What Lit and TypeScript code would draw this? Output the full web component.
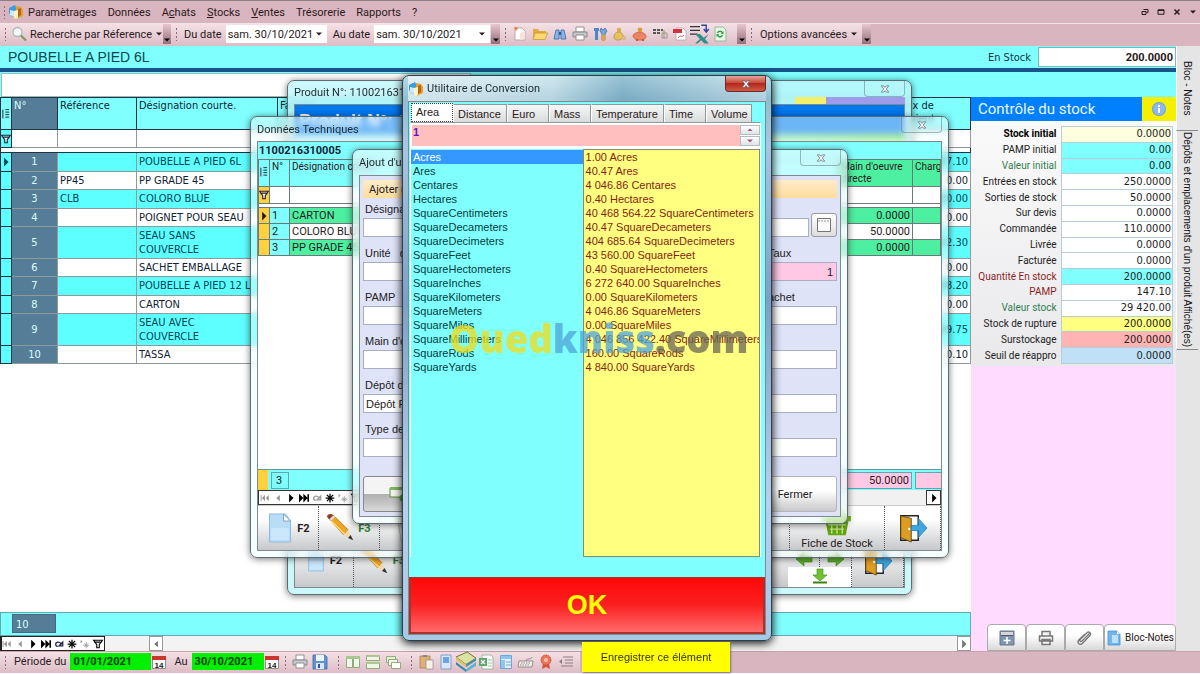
import { LitElement, html, css, svg, nothing, TemplateResult } from "lit";
import { customElement, property } from "lit/decorators.js";
import { classMap } from "lit/directives/class-map.js";

const glyphs: Record<string, TemplateResult> = {
  cube: svg`<path d="M1 4l6-3 1 2v11l-5-2-2-3z" fill="#3d9be0"/><path d="M2 6l4 1v6l-4-2z" fill="#cfeaff"/><path d="M8 2l5 1 2 3v6l-6 3-1-1z" fill="#e6a02a"/><path d="M10 5l3-1v7l-3 2z" fill="#b5651a"/><path d="M6 7l4-1v8l-2 1-2-1z" fill="#fff3c4"/>`,
  lens: svg`<circle cx="6.500" cy="6" r="4.500" fill="#f6fbfa" stroke="#aab8b4" stroke-width="1.300"/><path d="M10 9.500l5 5" stroke="#7c9a5d" stroke-width="2.200"/>`,
  fresh: svg`<path d="M3 2h7l3 3v9H3z" fill="#fff" stroke="#b9a9a9"/><path d="M2 1l4 1-2 3z" fill="#f2732f"/><path d="M8 7l5-2v8l-5 1z" fill="#f6e3d9"/>`,
  open: svg`<path d="M1 3h5l1 2h7v8H1z" fill="#e2ab3d"/><path d="M3 7h13l-3 6.500H1z" fill="#fbd873" stroke="#c89227" stroke-width=".7"/>`,
  binoc: svg`<path d="M2 13l2-9h3v9zM9 13V4h3l2 9z" fill="#8ab6e4" stroke="#4272ac" stroke-width=".9"/><path d="M7 6h2v3H7z" fill="#2c5b9b"/>`,
  print: svg`<path d="M4 1h8v5H4z" fill="#fff" stroke="#888" stroke-width=".9"/><path d="M1 6h14v5H1z" fill="#c6c8cc" stroke="#808286" stroke-width=".9"/><path d="M4 9h8v5H4z" fill="#fff" stroke="#888" stroke-width=".9"/>`,
  tools: svg`<path d="M2 2h5v3H6v9H3V5H2z" fill="#4e87c5"/><path d="M9 2l2 2 2-2 2 3-2 3v6h-3V8L8 5z" fill="#79a9d9" stroke="#35659d" stroke-width=".7"/><path d="M10 9h3v6h-3z" fill="#e8a431"/>`,
  coins: svg`<circle cx="7" cy="4" r="2.200" fill="#d8b24a"/><path d="M2 11c0-4 3-5 5-5s4 2 4 4-2 4-4 4-5 0-5-3z" fill="#e5c25c" stroke="#b3872c" stroke-width=".7"/><circle cx="12" cy="12" r="2.200" fill="#d9b98e"/>`,
  pig: svg`<circle cx="8" cy="4" r="2.400" fill="#e09a3a"/><path d="M1 10c1-5 12-5 13 0s-12 6-13 0z" fill="#ea8461" stroke="#c0583a" stroke-width=".7"/><path d="M4 13h2v2H4zM10 13h2v2h-2z" fill="#c0583a"/>`,
  cells: svg`<path d="M1 3h3v2H1zM5 3h3v2H5zM9 3h2v2H9zM1 6h3v2H1zM5 6h3v2H5z" fill="#555"/><path d="M10 7h5v5h-5z" fill="none" stroke="#999"/><path d="M12 4v8" stroke="#8b9c54"/>`,
  pdf: svg`<path d="M4 2h7l3 3v9H4z" fill="#fff" stroke="#b7a5a5" stroke-width=".8"/><path d="M1 3h9v4H1z" fill="#d2323c"/><path d="M6 12c3-4 4 0 6-3" stroke="#c66" fill="none"/>`,
  excel: svg`<path d="M0 2h8M0 5h8M0 8h6" stroke="#333" stroke-width="1"/><path d="M9 1h4v5M11 4l2 2.500L15 4" fill="none" stroke="#27479c" stroke-width="1.100"/><path d="M4 8h4l3 3 4-3-3 4 3 3.500h-3.500L9 13l-3 2.500H4L8 12z" fill="#2f8f86"/>`,
  reload: svg`<path d="M3 1h8l3 3v11H3z" fill="#e9f6e6" stroke="#8fb59a" stroke-width=".9"/><path d="M5.500 7c1-2.500 4-2.500 5 0M10.500 9c-1 2.500-4 2.500-5 0" fill="none" stroke="#2fa045" stroke-width="1.500"/><path d="M11.500 5v3H9zM4.500 11V8H7z" fill="#2fa045"/>`,
  save: svg`<path d="M1 1h12l2 2v12H1z" fill="#5f93d0" stroke="#3d6aa7" stroke-width=".8"/><path d="M4 1h8v6H4z" fill="#eef5fd"/><path d="M4 9h8v6H4z" fill="#d8e6f7"/><path d="M6 10h2v4H6z" fill="#2d5a97"/>`,
  cols: svg`<path d="M1.500 2.500h6v11h-6zM8.500 2.500h6v11h-6z" fill="#f0f6e8" stroke="#8eab78"/><path d="M1 2h14v3H1z" fill="#a9c690"/>`,
  rows: svg`<path d="M1.500 1.500h13v5h-13zM1.500 8.500h13v6h-13z" fill="#f0f6e8" stroke="#8eab78"/><path d="M1 1h14v2H1zM1 8h14v2H1z" fill="#a9c690"/>`,
  cascade: svg`<path d="M1.500 2.500h9v6h-9z" fill="#e6f2d9" stroke="#8eab78"/><path d="M3.500 5.500h9v6h-9z" fill="#f0f7e8" stroke="#8eab78"/><path d="M6.500 8.500h9v6h-9z" fill="#fff" stroke="#8eab78"/>`,
  paste: svg`<path d="M2 2h10v12H2z" fill="#dcb076" stroke="#a8814c" stroke-width=".8"/><path d="M5 1h4v2H5z" fill="#888"/><path d="M8 6h7v9H8z" fill="#f5f2ec" stroke="#9c968c" stroke-width=".8"/>`,
  note: svg`<path d="M3 1h10v14H3z" fill="#d9e8fa" stroke="#7c9fca"/><path d="M5 3h6v6H5z" fill="#6fa2e0"/>`,
  books: svg`<path d="M0 4l9-4 7 5-8 5z" fill="#d9e4a3" stroke="#7a6b34" stroke-width=".8"/><path d="M0 4l8 6v2L0 7z" fill="#e0c274"/><path d="M8 10l8-5v2l-8 5z" fill="#4a90a6"/><path d="M0 8l8 6v2l-8-6z" fill="#2f8aa1"/><path d="M8 14l8-6v3l-8 5z" fill="#57b6cf"/>`,
  xls: svg`<path d="M4 1h9l2 2v12H4z" fill="#fff" stroke="#8aa98a" stroke-width=".8"/><path d="M1 4h8v8H1z" fill="#5aa369"/><path d="M3 6l4 4M7 6l-4 4" stroke="#fff" stroke-width="1.300"/><path d="M10 6h4M10 9h4M10 12h4" stroke="#9bc49b"/>`,
  sheet: svg`<path d="M2.500 1.500h11v13h-11z" fill="#e4f1fc" stroke="#6aa8dc"/><path d="M3 2h10v3H3zM3 6h4v8H3z" fill="#8cc4ee"/><path d="M8 8h5M8 11h5" stroke="#6aa8dc"/>`,
  keys: svg`<path d="M1 7h14l-1 6H0z" fill="#f1efee" stroke="#8d8583" stroke-width=".9"/><path d="M3 9h10M2 11h10" stroke="#8d8583" stroke-dasharray="1.500 1"/><path d="M8 7c0-3 5-1 6-4" stroke="#8d8583" fill="none"/>`,
  seal: svg`<path d="M5 9l-1 6 4-2 4 2-1-6z" fill="#d8573b"/><circle cx="8" cy="6" r="5" fill="#e8745a" stroke="#c24a31" stroke-dasharray="1.500 1"/><circle cx="8" cy="6" r="2.200" fill="#f6b7a5"/>`,
  list: svg`<path d="M5 3h10M7 6h8M7 9h8M3 12h12" stroke="#8b7f83" stroke-width="1.200"/><path d="M4 5v5L1 7.500z" fill="#8b7f83"/>`,
  cal: svg`<path d="M1.500 2.500h13v12h-13z" fill="#fff" stroke="#8c8c8c"/><path d="M1 2h14v4H1z" fill="#c8372d"/><text x="8" y="13.500" font-size="8" font-weight="700" text-anchor="middle" fill="#222" font-family="Liberation Sans, sans-serif">14</text>`,
  doc: svg`<path d="M2 0h9l3 4v12H2z" fill="#b9dcf7" stroke="#8ebde2" stroke-width=".6"/><path d="M10 0l4 4h-4z" fill="#fff" stroke="#7a9cb8" stroke-width=".5"/><path d="M3 8h10v7H3z" fill="#cbe7fb"/>`,
  pencil: svg`<path d="M1 2.500L3.500.5 12 9l-2.500 3z" fill="#f0a41f" stroke="#9a6413" stroke-width=".4"/><path d="M2.500 4L10 11.500" stroke="#ffd676" stroke-width="1"/><path d="M0 1.500C0 0 2.500-.5 3.500.7L1.200 3z" fill="#8c3f2f"/><path d="M1.400 3L3.800.8l1 .9-2.500 2.300z" fill="#d9d9d9"/><path d="M12 9l2.500 5.500L9.500 12z" fill="#f3d9a8"/><path d="M13.500 12l1.500 3-3-1.300z" fill="#333"/>`,
  door: svg`<path d="M1 1h10v14H1z" fill="#fff" stroke="#222" stroke-width=".8"/><path d="M1 1l6 1.500V16L1 13.500z" fill="#dd9d23" stroke="#5c3f0d" stroke-width=".5"/><circle cx="5.800" cy="8.500" r=".7" fill="#fff"/><path d="M7 6.500h4V2.500l5 5.500-5 5.500v-4H7z" fill="#3fa6df" stroke="#1f6ea5" stroke-width=".4"/>`,
  basket: svg`<path d="M0 4h16v3H0z" fill="#7fc021"/><path d="M1.500 7h13L13 15H3z" fill="#63a614"/><path d="M3 9h10M4 11.500h8M5 7v7M8 7v7M11 7v7" stroke="#c7e88e" stroke-width=".8"/><path d="M3 4l3-4M13 4l-3-4" stroke="#7fc021" stroke-width="1.500"/>`,
  recycle: svg`<path d="M1 3h14l-2 13H3z" fill="#e9ece8" stroke="#b4bab2" stroke-width=".6"/><path d="M5 12l3-6 3 6z" fill="none" stroke="#4ea52c" stroke-width="2"/><path d="M0 1h16v2H0z" fill="#7fc75c"/>`,
  left: svg`<path d="M0 8l8-7v4h8v6H8v4z" fill="#5fb22b" stroke="#3b8412" stroke-width=".6"/>`,
  right: svg`<path d="M16 8L8 1v4H0v6h8v4z" fill="#5fb22b" stroke="#3b8412" stroke-width=".6"/>`,
  down: svg`<path d="M8 12L1 6h4V0h6v6h4z" fill="#6fc134" stroke="#3b8412" stroke-width=".6"/><path d="M1 13.500h14" stroke="#3b8412" stroke-width="2"/>`,
  info: svg`<circle cx="8" cy="8" r="7" fill="#6fa0e0"/><circle cx="8" cy="8" r="6" fill="#8db8ee"/><path d="M7 7h2v5H7zM7 4h2v2H7z" fill="#fff"/>`,
  window: svg`<path d="M1.500 1.500h13v13h-13z" fill="#fbfbfb" stroke="#777"/><path d="M2 4h12" stroke="#999" stroke-dasharray="2 1"/>`,
  calc: svg`<path d="M1 1h14v14H1z" fill="#7f96b2" stroke="#6b7788"/><path d="M2 2h12v3H2z" fill="#d6d6d6"/><path d="M2 5h12v1H2z" fill="#556"/><path d="M8 7v7M4.500 10.500h7" stroke="#fff" stroke-width="1.600"/>`,
  printer2: svg`<path d="M4 1.500h8V6H4zM1.500 6h13v5h-13zM4 9.500h8v5H4z" fill="#f4f4f4" stroke="#777" stroke-width="1.500"/>`,
  clip: svg`<path d="M13 3L5 11c-1.500 1.500-3-.2-1.700-1.600L10 2.800c2-2 5 .6 3 2.700l-7.500 7.700c-3 3-6-.8-3.500-3.400L8 4" fill="none" stroke="#777" stroke-width="1.300"/>`,
  memo: svg`<path d="M2 1h9l3 3v11H2z" fill="#6fb6ee" stroke="#4b8fc9" stroke-width=".8"/><path d="M6 5h6v8H6z" fill="#bfe0fb"/><path d="M11 1v3h3z" fill="#fff"/>`,
  plusdoc: svg`<path d="M0 2h15v9H0z" fill="#f2f7ec" stroke="#5b8a43"/><path d="M0 1h15v3H0z" fill="#86b562"/><circle cx="13" cy="12" r="3.500" fill="#4ea52c"/>`,
  first: svg`<path d="M1 3h1.500v10H1zM8 3v10L3 8zM14 3v10L9 8z" fill="currentColor"/>`,
  prev: svg`<path d="M11 3v10L5 8z" fill="currentColor"/>`,
  next: svg`<path d="M5 1v14l7-7z" fill="currentColor"/>`,
  last: svg`<path d="M13.500 2H16v12h-2.500zM0 1v14l7-7zM7 1v14l7-7z" fill="currentColor"/>`,
  redo: svg`<path d="M6 12C1 11 2 4 7 5c3 0 4 2 5 4M14 5v6H8z" fill="none" stroke="currentColor" stroke-width="2"/>`,
  star: svg`<path d="M8 1v14M1 8h14M3 3l10 10M13 3L3 13" stroke="currentColor" stroke-width="2"/>`,
  star2: svg`<path d="M10 5v10M5 10h10M7 7l6 6M13 7l-6 6" stroke="currentColor" stroke-width="1.300"/><path d="M1 1v6l3-3z" fill="currentColor"/>`,
  funnel: svg`<path d="M1 2h14L10 9v5H6V9zM2 5h12" fill="#fff" stroke="currentColor" stroke-width="1.800"/>`,
  bars: svg`<path d="M7 1h6M7 5h6M7 9h6M7 13h6M3 1v14" stroke="#223" stroke-width="1.500"/>`,
  cross: svg`<path d="M2 3h4l2 2.500L10 3h4l-4 5 4 5h-4l-2-2.500L6 13H2l4-5z" fill="#fff" stroke="#56606a" stroke-width="1.100"/>`,
  tiny: svg`<path d="M2 5l6 6 6-6z" fill="currentColor"/>`,
  tinyup: svg`<path d="M3 10l5-5 5 5z" fill="currentColor"/>`,
  restore: svg`<path d="M5 3h9v6h-3M2 7h8v6H2z" fill="none" stroke="currentColor" stroke-width="2"/>`,
  maxi: svg`<path d="M2 3.500h12v9H2zM2 5h12" fill="none" stroke="currentColor" stroke-width="2"/>`,
  quit: svg`<path d="M3 3l10 10M13 3L3 13" stroke="currentColor" stroke-width="3"/>`,
};

const ico = (name: string, cls = "i16") =>
  html`<svg class=${cls} viewBox="0 0 16 16" aria-hidden="true">${glyphs[name]}</svg>`;

const font = css`
  * { box-sizing: border-box; }
  button, input, select, a { font: inherit; color: inherit; margin: 0; padding: 0; border: 0; border-radius: 0; background: none; text-decoration: none; }
  button { display: flex; align-items: center; justify-content: center; white-space: nowrap; }
  input { min-width: 0; outline: 0; }
  svg { display: block; flex: none; overflow: visible; }
  .i8 { width: 8px; height: 8px; }
  .i10 { width: 10px; height: 10px; }
  .i12 { width: 12px; height: 12px; }
  .i16 { width: 16px; height: 16px; }
  .i20 { width: 20px; height: 20px; }
  .i28 { width: 28px; height: 28px; }
  table { border-collapse: collapse; table-layout: fixed; width: 100%; }
  th { font-weight: 400; text-align: left; }
  th, td { padding: 0; overflow: hidden; white-space: nowrap; }
`;

@customElement("desk-window")
class DeskWindow extends LitElement {
  @property() heading = "";
  @property() kind = "glass";
  static styles = [font, css`
    :host { position: absolute; display: flex; flex-direction: column; border: 1px solid #5d6b72; border-radius: 7px; padding: 0 6px 6px; box-shadow: 0 1px 7px rgba(0, 0, 0, .55); font-family: Roboto, sans-serif; font-size: 11px; overflow: hidden; }
    .bar { flex: none; display: flex; align-items: flex-start; color: #1c2a30; }
    .name { flex: 1; align-self: center; display: flex; gap: 3px; align-items: center; white-space: nowrap; }
    .x { width: 41px; height: 16px; border: 1px solid rgba(90, 120, 130, .5); border-top: 0; border-radius: 0 0 4px 4px; }
    .x.red { border-color: #6d2a25; background: linear-gradient(#e5a49b, #cb4a3a 45%, #b3281c 50%, #cf5a46); }
    .body { flex: 1; min-height: 0; display: flex; flex-direction: column; border: 1px solid #7b8b90; }
  `];
  render() {
    return html`
      <div class="bar" part="bar">
        <div class="name">${this.kind === "main" ? ico("cube") : nothing}<span>${this.heading}</span></div>
        <button class=${classMap({ x: true, red: this.kind === "main" })} aria-label="Fermer">${ico("cross", "i10")}</button>
      </div>
      <div class="body"><slot></slot></div>`;
  }
}

const units: [string, string][] = [
  ["Acres", "1.00"], ["Ares", "40.47"], ["Centares", "4 046.86"], ["Hectares", "0.40"],
  ["SquareCentimeters", "40 468 564.22"], ["SquareDecameters", "40.47"], ["SquareDecimeters", "404 685.64"],
  ["SquareFeet", "43 560.00"], ["SquareHectometers", "0.40"], ["SquareInches", "6 272 640.00"],
  ["SquareKilometers", "0.00"], ["SquareMeters", "4 046.86"], ["SquareMiles", "0.00"],
  ["SquareMillimeters", "4 046 856 422.40"], ["SquareRods", "160.00"], ["SquareYards", "4 840.00"],
];

@customElement("unit-converter")
class UnitConverter extends LitElement {
  static styles = [font, css`
    :host { flex: 1; display: flex; flex-direction: column; background: #80ffff; font-family: "Liberation Sans", sans-serif; font-size: 11px; min-height: 0; }
    .tabs { display: flex; align-items: flex-end; padding: 2px 0 0 2px; height: 20px; }
    .tab { height: 18px; padding: 0 4px; border: 1px solid #8a9a9c; border-bottom: 0; border-left-color: #fff; background: linear-gradient(#f6f6f6, #d9dcdc); justify-content: flex-start; }
    .tab.on { height: 19px; width: 42px; background: #fff; border: 1px dotted #444; padding: 0 4px 2px; }
    .tab.w54 { width: 54px; } .tab.w42 { width: 42px; } .tab.w72 { width: 73px; } .tab.w46 { width: 46px; }
    .page { flex: 1; min-height: 0; display: flex; flex-direction: column; margin: 0 4px 20px 1px; border: 1px solid #fff; border-top-color: #8a9a9c; border-bottom: 0; }
    .entry { display: flex; background: #fff; padding: 2px 0 3px 1px; height: 26px; }
    .entry input { flex: 1; background: #ffbfbf; color: #5a14c8; font-weight: 700; padding: 0 1px 8px; }
    .spin { display: flex; flex-direction: column; width: 20px; gap: 1px; }
    .spin button { flex: 1; border: 1px solid #b5bcc0; background: linear-gradient(#fff, #dfe4e6); color: #a05a78; }
    .lists { flex: 1; min-height: 0; display: flex; }
    ul { list-style: none; margin: 0; padding: 0; overflow: hidden; line-height: 14px; white-space: nowrap; }
    .from { flex: 173; padding-top: 1px; color: #043c3c; }
    .to { flex: 177; background: #ffff80; border: 1px solid #8a8a6a; color: #8a1c10; }
    li { padding-left: 2px; }
    .sel { background: #3399ff; color: #fff; }
    .ok { flex: none; height: 57px; border: 2px solid #a8322c; border-top-width: 1px; background: linear-gradient(#ff0808, #fb2020 50%, #ff6a6a); color: #ffff00; font-size: 27px; font-weight: 700; }
  `];
  render() {
    const tabs = [["Area", "on"], ["Distance", "w54"], ["Euro", "w42"], ["Mass", "w42"], ["Temperature", "w72"], ["Time", "w42"], ["Volume", "w46"]];
    return html`
      <div class="tabs" role="tablist">${tabs.map(([t, c]) => html`<button role="tab" class="tab ${c}">${t}</button>`)}</div>
      <div class="page">
        <div class="entry"><input aria-label="Valeur" value="1"><div class="spin">
          <button aria-label="Plus">${ico("tinyup", "i8")}</button><button aria-label="Moins">${ico("tiny", "i8")}</button></div></div>
        <div class="lists">
          <ul class="from" role="listbox" aria-label="Unité">${units.map(([u], i) => html`<li role="option" class=${i ? "" : "sel"}>${u}</li>`)}</ul>
          <ul class="to">${units.map(([u, v]) => html`<li>${v} ${u}</li>`)}</ul>
        </div>
      </div>
      <button class="ok">OK</button>`;
  }
}

@customElement("part-form")
class PartForm extends LitElement {
  static styles = [font, css`
    :host { flex: 1; display: flex; flex-direction: column; background: #dfe3f8; padding: 4px 3px; font-family: "Liberation Sans", sans-serif; font-size: 11px; color: #222; }
    .add { height: 18px; padding-left: 6px; justify-content: flex-start; background: linear-gradient(#ffeccb, #ffdc9c); font-family: Roboto, sans-serif; }
    .pair { display: flex; }
    .f { flex: 1; display: flex; flex-direction: column; }
    .f label { height: 25px; padding: 9px 0 0 2px; line-height: 14px; white-space: pre; }
    .f input { height: 19px; background: #fff; border: 1px solid #a9afc0; padding: 0 2px; }
    .first label { height: 20px; padding-top: 4px; }
    .right label { padding-left: 168px; }
    .right label.near { padding-left: 146px; }
    .right .rose { background: #ffc8e4; text-align: right; padding-right: 3px; }
    .pick { width: 26px; height: 24px; align-self: flex-end; margin-left: 2px; border: 1px solid #9a9a9a; border-radius: 3px; background: linear-gradient(#fff, #ddd); }
    .end { margin-top: auto; display: flex; justify-content: space-between; }
    .end button { height: 36px; border: 1px solid #b5b5bd; border-radius: 3px; background: linear-gradient(#fff 40%, #c9c9c9); font-family: Roboto, sans-serif; }
    .end .save { width: 70px; border-color: #888; background: linear-gradient(#f4f4f4 50%, #b0b0b0 51%, #d8d8d8); }
    .end .close { width: 84px; }
  `];
  render() {
    const rows = [
      ["Unité   de mesure", "", "Taux", "1"], ["PAMP", "", "Prix achet", ""], ["Main d'oeuvre", "", " ", ""],
      ["Dépôt de stock", "Dépôt Principal", " ", ""], ["Type de charge", "", " ", ""],
    ];
    return html`
      <button class="add">Ajoter un élément</button>
      <div class="pair"><div class="f first"><label for="d">Désignation</label><input id="d"></div>
        <button class="pick" aria-label="Choisir">${ico("window")}</button></div>
      ${rows.map(([a, v, b, w], i) => html`<div class="pair">
        <div class="f"><label for="a${i}">${a}</label><input id="a${i}" .value=${v}></div>
        <div class="f right"><label class=${i === 1 ? "near" : ""} for="b${i}">${b}</label><input id="b${i}" class=${w ? "rose" : ""} .value=${w}></div>
      </div>`)}
      <div class="end"><button class="save" aria-label="Enregistrer">${ico("plusdoc")}</button><button class="close">Fermer</button></div>`;
  }
}

@customElement("tech-sheet")
class TechSheet extends LitElement {
  static styles = [font, css`
    :host { flex: 1; min-height: 0; display: flex; flex-direction: column; background: #fff; font-family: Roboto, sans-serif; font-size: 11px; }
    .code { height: 17px; line-height: 17px; padding-left: 1px; background: #80ffff; font-weight: 700; color: #123; }
    .c1 { width: 11px; } .c2 { width: 20px; } .c4 { width: 74px; } .c5 { width: 28px; }
    td, th { border: 1px solid #6a7a78; height: 16px; padding: 0 2px; }
    th { background: #80ffff; height: 27px; vertical-align: top; line-height: 12px; white-space: pre-line; padding-top: 1px; font-size: 10px; }
    th.g, .g td { background: #4defa0; }
    tr td:first-child { background: #ffd040; padding: 0; }
    tr .no { background: #80ffff; } .g .no { background: #80ffff; }
    th:first-child { padding: 7px 0 0; }
    .num { text-align: right; }
    tr.filter td { height: 17px; padding: 0; } tr.gap td { height: 4px; background: #fff; }
    .space { flex: 1; }
    .sum { height: 21px; flex: none; display: flex; align-items: center; background: #80ffff; border-top: 1px solid #6a9a98; }
    .mark { width: 10px; align-self: stretch; background: #ffd040; margin-right: 3px; }
    .sum output { border: 1px solid #5fa8b0; height: 17px; line-height: 15px; padding: 0 4px; }
    .sum .one { width: 18px; }
    .sum .rose { background: #ffc8e4; width: 80px; margin-left: auto; text-align: right; padding: 0 2px; }
    .sum .cut { background: #ffc8e4; width: 26px; margin-left: 3px; border-right: 0; }
    .nav { height: 15px; flex: none; display: flex; justify-content: space-between; background: #f1f1f1; }
    .nav div { display: flex; gap: 3px; border: 1px solid #333; padding: 0 1px; background: #fff; }
    .nav button { width: 10px; color: #000; } .nav .off { color: #999; }
    .nav > button { width: 15px; border: 1px solid #333; background: #fff; }
    .cmds { height: 45px; flex: none; display: flex; background: linear-gradient(#fff 30%, #c6c8ca); border-top: 1px solid #ccc; }
    .cmds button { border-right: 1px dotted #555; gap: 3px; font-weight: 700; font-size: 11px; }
    .w61 { width: 61px; } .cmds .green { color: #2f7d2f; } .mid { flex: 1; }
    .cmds .stock { width: 96px; flex-direction: column; justify-content: flex-end; font-weight: 400; gap: 0; border-left: 1px dotted #555; }
    .w57 { width: 56px; }
  `];
  render() {
    const rows: [string, string, string][] = [["1", "CARTON", "0.0000"], ["2", "COLORO BLUE", "50.0000"], ["3", "PP GRADE 45", "0.0000"]];
    return html`
      <div class="code">1100216310005</div>
      <table>
        <colgroup><col class="c1"><col class="c2"><col><col class="c4"><col class="c5"></colgroup>
        <thead><tr><th>${ico("bars", "i10")}</th><th>N°</th><th>Désignation courte</th><th class="g">Main d'oeuvre directe</th><th class="g">Charg</th></tr></thead>
        <tbody>
          <tr class="filter"><td>${ico("funnel", "i10")}</td><td></td><td></td><td></td><td></td></tr>
          <tr class="gap"><td colspan="5"></td></tr>
          ${rows.map(([n, d, v], i) => html`<tr class=${i % 2 ? "" : "g"}><td>${i ? nothing : ico("next", "i10")}</td><td class="no">${n}</td><td>${d}</td><td class="num">${v}</td><td></td></tr>`)}
        </tbody>
      </table>
      <div class="space"></div>
      <div class="sum"><span class="mark"></span><output class="one">3</output><output class="rose">50.0000</output><output class="cut"></output></div>
      <div class="nav"><div>
        ${[["first", "off"], ["prev", "off"], ["next", ""], ["last", ""], ["redo", "off"], ["star", ""], ["star2", "off"], ["funnel", ""]].map(([n, c]) => html`<button class=${c} aria-label=${n}>${ico(n, "i10")}</button>`)}
      </div><button aria-label="Suite">${ico("next", "i10")}</button></div>
      <div class="cmds">
        <button class="w61">${ico("doc", "i28")}F2</button><button class="w61 green">${ico("pencil", "i28")}F3</button>
        <button class="w61 green" aria-label="Supprimer">${ico("recycle", "i28")}</button><span class="mid"></span>
        <button class="stock">${ico("basket", "i28")}Fiche de Stock</button><button class="w57" aria-label="Quitter">${ico("door", "i28")}</button>
      </div>`;
  }
}

@customElement("product-sheet")
class ProductSheet extends LitElement {
  static styles = [font, css`
    :host { flex: 1; min-height: 0; display: flex; flex-direction: column; background: #fff; font-family: Roboto, sans-serif; font-size: 11px; font-weight: 700; }
    h2 { margin: 0; height: 29px; padding-left: 4px; font: 700 18px/32px "Liberation Sans", sans-serif; background: #0078ee; color: #fff; }
    .lime { height: 8px; background: linear-gradient(90deg, #9fe6f4 60%, #6ee84a); }
    .space { flex: 1; }
    .cmds { height: 42px; display: flex; background: linear-gradient(#fff, #c6c8ca); }
    .cmds button { gap: 4px; border-right: 1px dotted #555; padding-bottom: 11px; }
    .w61 { width: 59px; } .cmds .green { color: #2f7d2f; } .mid { flex: 1; }
    .w57 { width: 52px; }
    .arrows { width: 64px; display: flex; flex-wrap: wrap; }
    .cmds .arrows button { width: 32px; height: 22px; padding: 5px 0 0; }
    .cmds .arrows .low { width: 64px; height: 20px; background: #fff; padding: 0; }
  `];
  render() {
    return html`<h2>Produit N°: 1100216310005</h2><div class="lime"></div><div class="space"></div>
      <div class="cmds"><button class="w61">${ico("doc", "i20")}F2</button><button class="w61 green">${ico("pencil", "i28")}F3</button><span class="mid"></span>
        <div class="arrows"><button aria-label="Précédent">${ico("left")}</button><button aria-label="Suivant">${ico("right")}</button><button class="low" aria-label="Dernier">${ico("down")}</button></div>
        <button class="w57" aria-label="Quitter">${ico("door", "i28")}</button></div>`;
  }
}

@customElement("stock-panel")
class StockPanel extends LitElement {
  static styles = [font, css`
    :host { width: 205px; flex: none; display: flex; flex-direction: column; background: #ffdcff; font-family: Roboto, sans-serif; font-size: 10px; }
    header { display: flex; height: 24px; background: #0080ff; color: #e8f6ff; }
    h2 { flex: 1; margin: 0; padding-left: 7px; font: 15px/24px Roboto, sans-serif; }
    .info { width: 34px; background: #f5f000; }
    .box { background: linear-gradient(#fafafa, #e9e9ec); padding: 5px 3px 2px 0; }
    table { height: 238px; }
    .lab { width: 90px; }
    th { text-align: right; padding-right: 4px; color: #222; line-height: 14px; }
    td { text-align: right; padding-right: 1px; background: #fff; border: 1px solid #b9cdd6; line-height: 14px; font-family: "DejaVu Sans Condensed", "DejaVu Sans", sans-serif; font-size: 11px; color: #222; }
    .b th { font-weight: 700; color: #000; } .cream td { background: #ffffe0; } .cyan td { background: #80ffff; }
    .gr th { color: #2f7f4f; } .rd th { color: #8a1f1f; } .yel td { background: #ffff80; } .rose td { background: #ffb3b3; } .sky td { background: #bfe0f7; }
    .acts { margin-top: auto; display: flex; padding-left: 16px; }
    .acts button { height: 27px; border: 1px solid #aaa; border-radius: 4px 4px 0 0; background: linear-gradient(#fff 40%, #d9d9d9); flex: 1; gap: 3px; }
    .acts .wide { flex: none; width: 72px; }
  `];
  render() {
    const rows: [string, string, string][] = [
      ["Stock initial", "0.0000", "b cream"], ["PAMP initial", "0.00", "cyan"], ["Valeur initial", "0.00", "gr cyan"],
      ["Entrées en stock", "250.0000", ""], ["Sorties de stock", "50.0000", ""], ["Sur devis", "0.0000", ""],
      ["Commandée", "110.0000", ""], ["Livrée", "0.0000", ""], ["Facturée", "0.0000", ""],
      ["Quantité En stock", "200.0000", "rd cyan"], ["PAMP", "147.10", "rd"], ["Valeur stock", "29 420.00", "gr"],
      ["Stock de rupture", "200.0000", "yel"], ["Surstockage", "200.0000", "rose"], ["Seuil de réappro", "0.0000", "sky"],
    ];
    return html`<header><h2>Contrôle du stock</h2><button class="info" aria-label="Info">${ico("info")}</button></header>
      <div class="box"><table><colgroup><col class="lab"><col></colgroup><tbody>
        ${rows.map(([l, v, c]) => html`<tr class=${c}><th scope="row">${l}</th><td>${v}</td></tr>`)}</tbody></table></div>
      <div class="acts"><button aria-label="Calcul">${ico("calc")}</button><button aria-label="Imprimer">${ico("printer2")}</button>
        <button aria-label="Joindre">${ico("clip")}</button><button class="wide">${ico("memo")}Bloc-Notes</button></div>`;
  }
}

@customElement("product-grid")
class ProductGrid extends LitElement {
  static styles = [font, css`
    :host { flex: 1; min-width: 0; display: flex; flex-direction: column; background: #fff; font-family: "DejaVu Sans Condensed", "DejaVu Sans", sans-serif; font-size: 11px; color: #123; }
    .c1 { width: 11px; } .c2 { width: 46px; } .c3 { width: 79px; } .c4 { width: 141px; } .c6 { width: 73px; }
    td { border: 1px solid #8d9b9d; height: 18px; padding: 0 2px; line-height: 14px; white-space: normal; }
    tr.odd td { background: #5effff; color: #045; height: 19px; } tr.tall td { height: 32px; }
    th { background: #80ffff; height: 32px; vertical-align: top; border: 1px solid #234; padding: 1px 2px; }
    tr td:first-child { background: #5effff; border-color: #234; padding: 0; }
    tr .n, th.n { background: #557d98 !important; color: #dff !important; text-align: center; }
    th.n { text-align: left; }
    th:first-child { padding: 11px 0 0; }
    .num { text-align: right; white-space: nowrap; }
    .filter td { height: 18px; } tr.gap td { height: 5px; background: #fff; border-color: #234; }
    .space { flex: 1; }
    .sum { height: 24px; flex: none; display: flex; background: #80ffff; border: 1px solid #6aa; padding: 1px 0 0 11px; }
    .sum output { width: 44px; height: 19px; line-height: 19px; padding-left: 3px; background: #557d98; color: #dff; border: 1px solid #468; }
    .nav { height: 15px; flex: none; display: flex; background: #f3f3f3; align-items: stretch; }
    .tools { display: flex; width: 105px; border: 1px solid #222; border-left-width: 2px; gap: 3px; background: #fff; }
    .tools button { width: 10px; color: #000; } .tools .off { color: #999; } .tools .blue { color: #224; }
    .sl { width: 14px; border: 1px solid #999; background: #fff; color: #777; margin-left: 44px; }
    .sl.end { margin-left: auto; }
  `];
  render() {
    const rows: [string, string, string, string][] = [
      ["1", "", "POUBELLE A PIED 6L", "147.10"], ["2", "PP45", "PP GRADE 45", "0.00"], ["3", "CLB", "COLORO BLUE", "120.00"],
      ["4", "", "POIGNET POUR SEAU", "0.00"], ["5", "", "SEAU SANS COUVERCLE", "102.30"], ["6", "", "SACHET EMBALLAGE", "0.00"],
      ["7", "", "POUBELLE A PIED 12 L", "98.20"], ["8", "", "CARTON", "0.00"], ["9", "", "SEAU AVEC COUVERCLE", "109.75"], ["10", "", "TASSA", "0.10"],
    ];
    return html`<table>
        <colgroup><col class="c1"><col class="c2"><col class="c3"><col class="c4"><col><col class="c6"></colgroup>
        <thead><tr><th>${ico("bars", "i10")}</th><th class="n">N°</th><th>Référence</th><th>Désignation courte.</th><th>Famille</th><th>Prix de<br>revient</th></tr></thead>
        <tbody>
          <tr class="filter"><td>${ico("funnel", "i10")}</td><td></td><td></td><td></td><td></td><td></td></tr>
          <tr class="gap"><td colspan="6"></td></tr>
          ${rows.map(([n, r, d, p], i) => html`<tr class=${classMap({ odd: i % 2 === 0, tall: n === "5" || n === "9" })}>
            <td>${i ? nothing : ico("next", "i10")}</td><td class="n">${n}</td><td>${r}</td><td>${n === "5" || n === "9" ? html`${d.slice(0, 9)}<br>${d.slice(10)}` : d}</td><td></td><td class="num">${p}</td></tr>`)}
        </tbody></table>
      <div class="space"></div>
      <div class="sum"><output>10</output></div>
      <div class="nav"><div class="tools">
        ${[["first", "off"], ["prev", "off"], ["next", ""], ["last", ""], ["redo", "blue"], ["star", ""], ["star2", "off"], ["funnel", ""]].map(([n, c]) => html`<button class=${c} aria-label=${n}>${ico(n, "i10")}</button>`)}
      </div><button class="sl" aria-label="Gauche">${ico("prev", "i10")}</button><button class="sl end" aria-label="Droite">${ico("next", "i10")}</button></div>`;
  }
}

@customElement("app-root")
class AppRoot extends LitElement {
  static styles = [font, css`
    :host { display: flex; flex-direction: column; height: 100vh; position: relative; overflow: hidden; background: #fff; font-family: Roboto, sans-serif; font-size: 11px; color: #2b1a20; }
    .menu { flex: none; height: 24px; display: flex; align-items: center; gap: 11px; background: #d9b5bf; border-top: 1px solid #8f8083; border-bottom: 1px solid #f3e4e8; padding: 0 3px; }
    .menu .ctl { margin-left: auto; display: flex; gap: 8px; }
    .menu .i16 { margin-right: -7px; }
    .grip { width: 3px; height: 14px; flex: none; background: radial-gradient(circle, #8a6b74 1px, transparent 1px) 0 0 / 3px 4px; }
    .menu .grip { margin-right: -9px; }
    .strip { flex: none; height: 22px; display: flex; background: #d9b5bf; }
    .grp { display: flex; align-items: center; padding: 0 0 2px 4px; background: linear-gradient(#f4e0e5, #ddbcc6); white-space: nowrap; }
    .more { width: 9px; height: 20px; margin-left: auto; background: linear-gradient(#e6c6cf, #947079); color: #000; align-items: flex-end; }
    .g1 { width: 171px; } .g2 { width: 329px; } .g3 { width: 246px; } .g4 { width: 125px; }
    .g1 button, .g4 button { gap: 3px; }
    .g1 .srch { margin-left: 4px; } .g4 .opt { margin-left: 7px; }
    .g2 label { padding: 0 4px 0 6px; }
    select { appearance: none; width: 101px; height: 18px; background: #fff; padding-left: 2px; }
    .g2 .second { width: 116px; }
    .combo { display: flex; align-items: center; } .combo svg { margin-left: -12px; margin-right: 4px; pointer-events: none; }
    .icons { display: flex; align-items: center; gap: 4px; margin-left: 5px; }
    .icons .i20 { margin: -2px; }
    .main { flex: 1; min-height: 0; display: flex; }
    .work { flex: 1; min-width: 0; display: flex; flex-direction: column; }
    .head { height: 22px; flex: none; display: flex; align-items: center; background: #80ffff; font-family: "DejaVu Sans Condensed", "DejaVu Sans", sans-serif; }
    h1 { flex: 1; margin: 0; padding-left: 8px; font: 14px "Liberation Sans", sans-serif; color: #08484c; }
    .head label { padding-right: 7px; color: #134; }
    .head input { width: 138px; height: 20px; background: #fff; border: 1px solid #7bb; text-align: right; font: 700 11px Roboto, sans-serif; padding-right: 2px; }
    .find { height: 29px; flex: none; border-top: 4px solid #18548c; background: #80ffff; padding: 1px 0 0 1px; display: flex; }
    .find input { width: 40%; background: #fff; border: 1px solid #9bb; }
    .cols { flex: 1; min-height: 0; display: flex; }
    .side { width: 24px; flex: none; background: #e5e5e5; display: flex; flex-direction: column; font-size: 10px; }
    .side button { writing-mode: vertical-rl; border-bottom: 1px solid #888; border-left: 1px solid #fff; width: 22px; font-family: "Liberation Sans", sans-serif; color: #111; }
    .s1 { height: 85px; } .s2 { height: 219px; }
    .foot { flex: none; height: 22px; margin-bottom: 1px; border-top: 1px solid #c9a3ae; }
    .f1 { width: 280px; } .f2 { width: 53px; } .f3 { width: 73px; } .f4 { width: 174px; }
    .f1 input { height: 17px; background: #00f000; font: 700 11px Roboto, sans-serif; padding-left: 3px; color: #033a03; }
    .d1 { width: 81px; } .d2 { width: 72px; }
    .f1 label { padding: 0 4px 0 7px; }
    .prod { left: 287px; top: 80px; width: 625px; height: 515px; background: rgba(190, 246, 250, .8); backdrop-filter: blur(3px); }
    .prod::part(bar) { height: 23px; background: linear-gradient(90deg, transparent 82%, #f4f06a 82%, #f4f06a 87%, #9d9bea 87%) 0 16px no-repeat; }
    .tech { left: 250px; top: 116px; width: 699px; height: 442px; background: rgba(240, 254, 255, .45); backdrop-filter: blur(3px); }
    .tech::part(bar) { height: 24px; }
    .ajout { left: 352px; top: 149px; width: 496px; height: 375px; background: rgba(240, 253, 255, .6); backdrop-filter: blur(4px); }
    .ajout::part(bar) { height: 25px; }
    .conv { left: 402px; top: 75px; width: 370px; height: 566px; padding: 0 5px 5px; border-color: #2d3f4c; background: linear-gradient(#b7dce6, #8fbdd0 4%, #a9c6e2 12%, #7e9fc4 40%, #b9d0ea 75%, #a6c9e6); box-shadow: 0 2px 10px #000; }
    .conv::part(bar) { height: 25px; background: linear-gradient(90deg, rgba(255,255,255,.6), rgba(255,255,255,.35) 40%, rgba(60,120,160,.25) 60%, rgba(255,255,255,.3)); }
    .mark { position: absolute; left: 449px; top: 311px; font: 800 38px/54px "Open Sans", sans-serif; opacity: .75; pointer-events: none; }
    .ma { color: #f2dc18; } .mb { color: #4ea3d8; } .mc { color: #6b6656; }
    .tip { position: absolute; left: 582px; top: 642px; width: 148px; height: 30px; background: #ffff00; text-align: center; font: 11px/30px "Liberation Sans", sans-serif; box-shadow: 1px 1px 2px #777; color: #332; }
  `];
  render() {
    const more = html`<button class="more" aria-label="Plus">${ico("tiny", "i8")}</button>`;
    const icons = (names: string[]) => html`<div class="icons">${names.map((n) => html`<button aria-label=${n}>${ico(n, n === "excel" || n === "books" ? "i20" : "i16")}</button>`)}</div>`;
    return html`
      <nav class="menu"><span class="grip"></span>${ico("cube")}
        ${["Paramètrages", "Données"].map((t) => html`<a href="#">${t}</a>`)}
        <a href="#">A<u>c</u>hats</a><a href="#"><u>S</u>tocks</a><a href="#"><u>V</u>entes</a>
        ${["Trésorerie", "Rapports", "?"].map((t) => html`<a href="#">${t}</a>`)}
        <div class="ctl"><button aria-label="Restaurer">${ico("restore", "i8")}</button><button aria-label="Agrandir">${ico("maxi", "i8")}</button><button aria-label="Quitter">${ico("quit", "i8")}</button><button aria-label="Options">${ico("tiny", "i8")}</button></div>
      </nav>
      <div class="strip">
        <div class="grp g1"><span class="grip"></span><button class="srch">${ico("lens")}Recherche par Réference${ico("tiny", "i8")}</button>${more}</div>
        <div class="grp g2"><span class="grip"></span><label for="from">Du date</label><span class="combo"><select id="from"><option>sam. 30/10/2021</option></select>${ico("tiny", "i8")}</span>
          <label for="to">Au date</label><span class="combo"><select id="to" class="second"><option>sam. 30/10/2021</option></select>${ico("tiny", "i8")}</span>${more}</div>
        <div class="grp g3"><span class="grip"></span>${icons(["fresh", "open", "binoc", "print", "tools", "coins", "pig", "cells", "pdf", "excel", "reload"])}${more}</div>
        <div class="grp g4"><span class="grip"></span><button class="opt">Options avancées${ico("tiny", "i8")}</button>${more}</div>
      </div>
      <div class="main">
        <div class="work">
          <div class="head"><h1>POUBELLE A PIED 6L</h1><label for="stk">En Stock</label><input id="stk" value="200.0000"></div>
          <div class="find"><input aria-label="Recherche"></div>
          <div class="cols"><product-grid></product-grid><stock-panel></stock-panel></div>
        </div>
        <div class="side"><button class="s1">Bloc - Notes</button><button class="s2">Dépôts et emplacements d'un produit Affiché(es)</button></div>
      </div>
      <div class="strip foot">
        <div class="grp f1"><span class="grip"></span><label for="p1">Période du</label><input id="p1" class="d1" value="01/01/2021">${ico("cal")}<label for="p2">Au</label><input id="p2" class="d2" value="30/10/2021">${ico("cal")}</div>
        <div class="grp f2"><span class="grip"></span>${icons(["print", "save"])}</div>
        <div class="grp f3"><span class="grip"></span>${icons(["cols", "rows", "cascade"])}</div>
        <div class="grp f4"><span class="grip"></span>${icons(["paste", "note", "books", "xls", "sheet", "keys", "seal", "list"])}</div>
      </div>
      <desk-window class="prod" heading="Produit N°: 1100216310005"><product-sheet></product-sheet></desk-window>
      <desk-window class="tech" heading="Données Techniques"><tech-sheet></tech-sheet></desk-window>
      <desk-window class="ajout" heading="Ajout d'un élément"><part-form></part-form></desk-window>
      <desk-window class="conv" kind="main" heading="Utilitaire de Conversion"><unit-converter></unit-converter></desk-window>
      <div class="mark"><span class="ma">Oued</span><span class="mb">kniss</span><span class="mc">.com</span></div>
      <div class="tip" role="tooltip">Enregistrer ce élément</div>`;
  }
}
